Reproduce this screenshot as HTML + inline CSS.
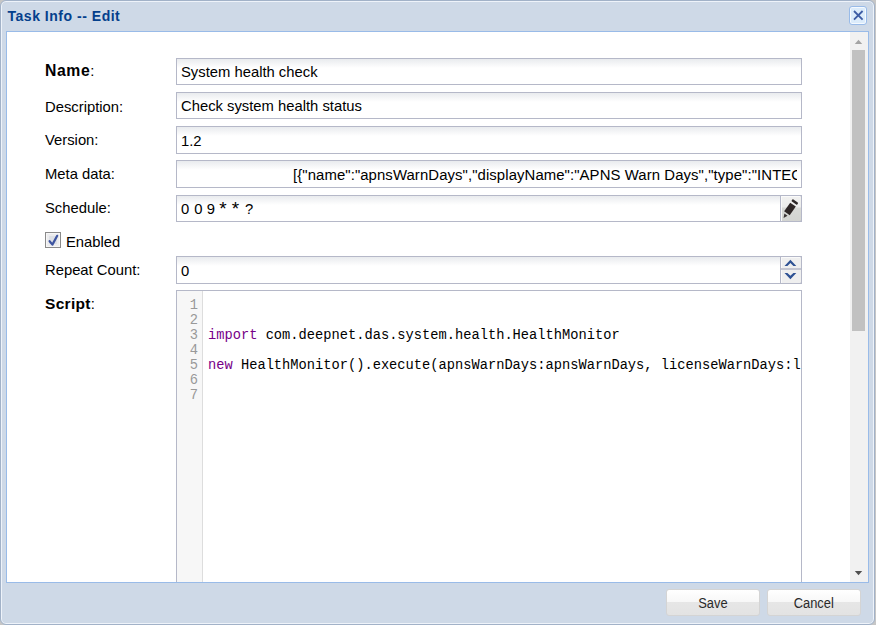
<!DOCTYPE html>
<html><head><meta charset="utf-8">
<style>
*{box-sizing:border-box}
html,body{margin:0;padding:0}
body{width:876px;height:625px;background:#c6c6c6;position:relative;overflow:hidden;font-family:"Liberation Sans",sans-serif;}
.abs{position:absolute}
.win{left:0;top:0;width:875px;height:625px;border:1px solid #a2b2c8;border-radius:6px;background:#ced9e7;box-shadow:inset 0 0 0 1px #eef3fa}
.title{left:7.5px;top:8px;font-weight:bold;font-size:14px;letter-spacing:0.52px;color:#04408c;line-height:16px;white-space:nowrap}
.close{left:849px;top:6px;width:18px;height:19px;border:1px solid #99bbe8;border-radius:3px;background:#dcecfb;box-shadow:inset 0 0 0 1px #f5faff}
.wbody{left:6px;top:31px;width:863px;height:552px;border:1px solid #99bbe8;background:#fff;overflow:hidden}
.lbl{left:38px;font-size:14.8px;line-height:16px;color:#000;white-space:nowrap}
.lbl b{letter-spacing:0.3px;font-size:15.5px}
.lbl b.nm{letter-spacing:0.6px;font-size:15.75px}
.fld{left:169px;width:626px;height:27px;border:1px solid #b5b8c8;background:linear-gradient(#e9ebee,#fff 9px);overflow:hidden}
.fld span{position:absolute;left:4px;top:4.5px;font-size:14.8px;line-height:16px;color:#000;white-space:nowrap}
.trig{position:absolute;right:-1px;top:-1px;width:22px;height:27px;border:1px solid #b5b8c8;border-top-right-radius:2px;border-bottom-right-radius:2px;background:linear-gradient(#f2f2f1,#ececeb 11px,#d8d9d6 12px,#d3d4d1);box-shadow:inset 1px 1px 0 #fafafa}
.spin{position:absolute;right:-1px;top:-1px;width:22px;height:28px;border:1px solid #b5b8c8;border-top-right-radius:2px;border-bottom-right-radius:2px;background:#efefef;box-shadow:inset 1px 1px 0 #fafafa}
.fld span.ast{font-size:19px;top:4.5px}
.sb{left:843px;top:0;width:18px;height:550px;background:#f1f1f1}
.btn{top:589px;height:27px;border:1px solid #d4d4d4;border-radius:3px;background:linear-gradient(#fff,#f7f7f7 12px,#e6e6e6 12px,#e3e3e3);text-align:center;font-size:14px;line-height:25px;color:#2a2a2a}
.btn span{display:inline-block;transform:scaleX(0.92);line-height:26px}
.cm{left:169px;top:258px;width:626px;height:400px;border:1px solid #b5b8c8;background:#fff;overflow:hidden}
.gut{position:absolute;left:0;top:0;width:26px;height:100%;background:#f7f7f7;border-right:1px solid #ddd}
.ln{position:absolute;left:0;width:21px;text-align:right;font-family:"Liberation Mono",monospace;font-size:13.73px;line-height:15px;color:#999}
.code{position:absolute;left:31px;top:7px;font-family:"Liberation Mono",monospace;font-size:13.73px;line-height:15px;color:#000;white-space:pre}
.kw{color:#708}
</style></head>
<body>
<div class="abs win"></div>
<div class="abs title">Task Info -- Edit</div>
<div class="abs close"><svg width="16" height="17" style="position:absolute;left:0;top:0"><path d="M4 4L12.6 12.7M12.6 4L4 12.7" stroke="#3d5ca4" stroke-width="1.8"/></svg></div>
<div class="abs wbody">
  <div class="abs lbl" style="top:31px"><b class="nm">Name</b>:</div>
  <div class="abs lbl" style="top:67px">Description:</div>
  <div class="abs lbl" style="top:100px">Version:</div>
  <div class="abs lbl" style="top:134px">Meta data:</div>
  <div class="abs lbl" style="top:168px">Schedule:</div>
  <div class="abs lbl" style="top:202px;left:59px">Enabled</div>
  <div class="abs lbl" style="top:230px">Repeat Count:</div>
  <div class="abs lbl" style="top:264px"><b>Script</b>:</div>

  <div class="abs fld" style="top:26px"><span>System health check</span></div>
  <div class="abs fld" style="top:60px"><span>Check system health status</span></div>
  <div class="abs fld" style="top:94px;height:28px"><span style="top:5.5px">1.2</span></div>
  <div class="abs fld" style="top:128px;height:28px"><div style="position:absolute;left:0;top:0;width:620px;height:25px;overflow:hidden"><span style="left:116px;top:5.5px;font-size:14.9px;letter-spacing:0.09px">[{"name":"apnsWarnDays","displayName":"APNS Warn Days","type":"INTEGER"}]</span></div></div>
  <div class="abs fld" style="top:163px"><span style="left:4px">0</span><span style="left:17.2px">0</span><span style="left:29.8px">9</span><span class="ast" style="left:42.2px">*</span><span class="ast" style="left:54.8px">*</span><span style="left:68px">?</span>
    <div class="trig"><svg width="20" height="25" style="position:absolute;left:0;top:0">
      <g transform="translate(9.2 12.6) rotate(35)">
        <rect x="-3.4" y="-9.4" width="6.8" height="2.7" rx="0.8" fill="#2e2828"/>
        <rect x="-3.4" y="-4.9" width="6.8" height="10.6" fill="#2e2626"/>
        <path d="M-1.9 7.4L1.9 7.4L0 11.6Z" fill="#3a3434"/>
      </g></svg></div>
  </div>
  <div class="abs" style="left:38px;top:200px;width:16px;height:16px;border:1px solid #8a8a8a;background:#ececee;box-shadow:inset 0 0 0 1px #f6f6f6">
    <div style="position:absolute;left:3px;top:3px;width:8px;height:8px;background:#dde0e6"></div>
    <svg width="14" height="14" style="position:absolute;left:0;top:0"><path d="M3.6 8.2L6.4 11.6L11.2 2.8" fill="none" stroke="#3d54a0" stroke-width="2.2" stroke-linecap="round" stroke-linejoin="round"/></svg>
  </div>
  <div class="abs fld" style="top:224px;height:28px"><span style="top:5.5px">0</span>
    <div class="spin">
      <div style="position:absolute;left:0;top:11px;width:20px;height:2px;background:#c4c6d2"></div>
      <svg width="20" height="26" style="position:absolute;left:0;top:0">
        <path d="M3.5 8.9L9.4 2.7L15.3 8.9L12.4 8.9L9.4 6.1L6.4 8.9Z" fill="#2f5294"/>
        <path d="M3.5 16L6.4 16L9.4 18.8L12.4 16L15.3 16L9.4 22.2Z" fill="#2f5294"/>
      </svg>
    </div>
  </div>

  <div class="abs cm">
    <div class="gut">
      <div class="ln" style="top:7px">1<br>2<br>3<br>4<br>5<br>6<br>7</div>
    </div>
    <div class="code">

<span class="kw">import</span> com.deepnet.das.system.health.HealthMonitor

<span class="kw">new</span> HealthMonitor().execute(apnsWarnDays:apnsWarnDays, licenseWarnDays:licenseWarnDays)

</div>
  </div>

  <div class="abs sb">
    <svg width="18" height="550" style="position:absolute;left:0;top:0">
      <path d="M4.8 12L8.5 7.8L12.2 12Z" fill="#a3a3a3"/>
      <rect x="2" y="18" width="13" height="281" fill="#c1c1c1"/>
      <path d="M4.8 539L12.2 539L8.5 543.2Z" fill="#505050"/>
    </svg>
  </div>
</div>
<div class="abs btn" style="left:666px;width:94px"><span>Save</span></div>
<div class="abs btn" style="left:767px;width:94px"><span>Cancel</span></div>
</body></html>
